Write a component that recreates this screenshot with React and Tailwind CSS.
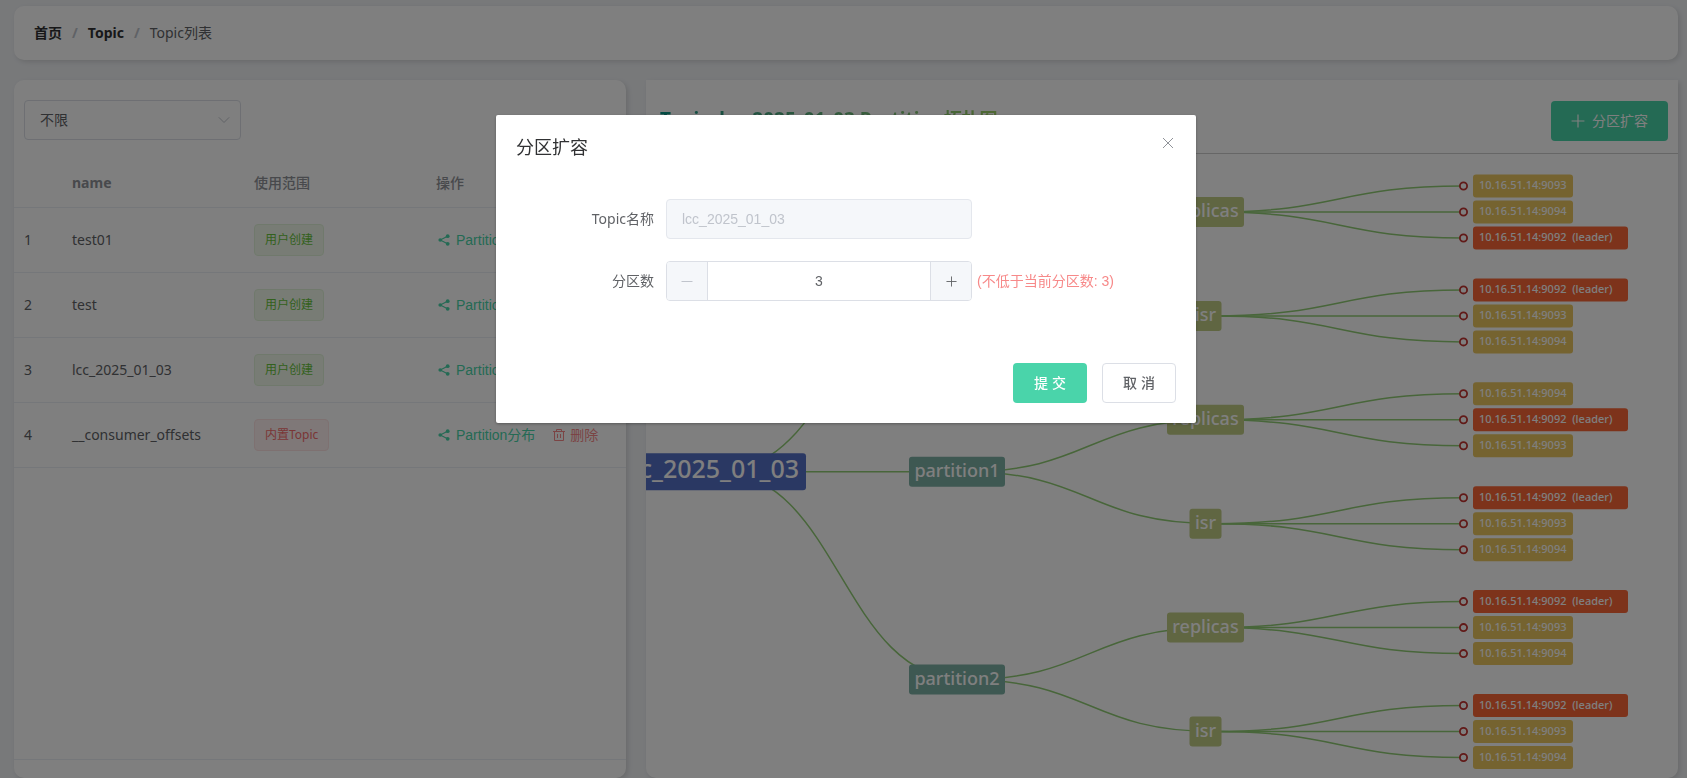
const UI = "font-['Noto_Sans','Noto_Sans_CJK_SC',sans-serif]";
const CTRL = "font-['Liberation_Sans','Noto_Sans_CJK_SC',sans-serif]";

const topics = [
  { name: 'test01', builtin: false },
  { name: 'test', builtin: false },
  { name: 'lcc_2025_01_03', builtin: false },
  { name: '__consumer_offsets', builtin: true },
];

const X = { root: 716, part: 965, group: 1214, leaf: 1463.5 };
const groups = [
  { name: 'replicas', leaves: ['9093', '9094', '9092'] },
  { name: 'isr', leaves: ['9092', '9093', '9094'] },
  { name: 'replicas', leaves: ['9094', '9092', '9093'] },
  { name: 'isr', leaves: ['9092', '9093', '9094'] },
  { name: 'replicas', leaves: ['9092', '9093', '9094'] },
  { name: 'isr', leaves: ['9092', '9093', '9094'] },
].map((g, i) => ({ ...g, y: 212 + i * 103.9 }));
const partitions = [0, 1, 2].map((i) => ({ name: `partition${i}`, y: 264 + i * 207.8 }));
const ROOT_Y = 471.8;

function curve(x0, y0, x1, y1) {
  const m = (x0 + x1) / 2;
  return `M${x0} ${y0}C${m} ${y0} ${m} ${y1} ${x1} ${y1}`;
}

function Node({ x, y, w, h, fill, children }) {
  return (
    <g>
      <rect x={x} y={y - h / 2} width={w} height={h} rx="3" fill={fill} />
      {children}
    </g>
  );
}

function Topology() {
  return (
    <svg viewBox="646 154 1032 624" className={`block w-full font-medium ${UI}`} role="img" aria-label="Partition拓扑图">
      <g fill="none" stroke="#91cc75" strokeWidth="1.5">
        {partitions.map((p) => (
          <path key={p.name} d={curve(X.root, ROOT_Y, X.part, p.y)} />
        ))}
        {groups.map((g, i) => (
          <path key={i} d={curve(X.part, partitions[Math.floor(i / 2)].y, X.group, g.y)} />
        ))}
        {groups.map((g, i) =>
          g.leaves.map((l, j) => <path key={`${i}-${l}`} d={curve(X.group, g.y, X.leaf, g.y + (j - 1) * 26)} />),
        )}
      </g>
      <Node x={606} y={ROOT_Y} w={200} h={37} fill="#5470c6">
        <text x="799" y="478" textAnchor="end" fontSize="25" fill="#fff">lcc_2025_01_03</text>
      </Node>
      {partitions.map((p) => (
        <Node key={p.name} x={909} y={p.y} w={96} h={30} fill="#7cb0a4">
          <text x="957" y={p.y + 5} textAnchor="middle" fontSize="18" fill="#fff">{p.name}</text>
        </Node>
      ))}
      {groups.map((g, i) => {
        const w = g.name === 'isr' ? 32 : 77;
        return (
          <g key={i}>
            <Node x={1205.5 - w / 2} y={g.y} w={w} h={30} fill="#c0cc84">
              <text x="1205.5" y={g.y + 5} textAnchor="middle" fontSize="18" fill="#fff">{g.name}</text>
            </Node>
            {g.leaves.map((l, j) => {
              const y = g.y + (j - 1) * 26;
              const leader = l === '9092';
              return (
                <g key={l}>
                  <circle cx={X.leaf} cy={y} r="3.6" fill="#fff" stroke="#c23531" strokeWidth="1.8" />
                  <Node x={1473} y={y} w={leader ? 155 : 100} h={23} fill={leader ? '#fb6636' : '#eac660'}>
                    <text x="1479" y={y + 3} fontSize="11" fill="#fff" className="whitespace-pre">
                      {`10.16.51.14:${l}${leader ? '  (leader)' : ''}`}
                    </text>
                  </Node>
                </g>
              );
            })}
          </g>
        );
      })}
    </svg>
  );
}

function ShareIcon() {
  return (
    <svg className="size-3" viewBox="0 0 12 12" fill="currentColor" stroke="currentColor" aria-hidden="true">
      <path d="M2.2 6 9.6 2.2M2.2 6l7.4 3.8" fill="none" strokeWidth="1.1" />
      <circle cx="2.2" cy="6" r="1.8" stroke="none" />
      <circle cx="9.7" cy="2.2" r="1.9" stroke="none" />
      <circle cx="9.7" cy="9.8" r="1.9" stroke="none" />
    </svg>
  );
}

function TrashIcon() {
  return (
    <svg className="size-3.5" viewBox="0 0 14 14" fill="none" stroke="currentColor" aria-hidden="true">
      <path d="M1 3.5h12M2.5 3.5v9h9v-9M4.5 3.5v-2h5v2M5.5 6v4M8.5 6v4" />
    </svg>
  );
}

function PlusIcon({ className }) {
  return (
    <svg className={className} viewBox="0 0 12 12" fill="none" stroke="currentColor" aria-hidden="true">
      <path d="M6 .5v11M.5 6h11" />
    </svg>
  );
}

function Dialog() {
  return (
    <div className="fixed inset-0 flex items-start justify-center bg-black/50 pt-[115px] pl-[5px]">
      <div role="dialog" aria-modal="true" aria-labelledby="dlg-title" className="w-[700px] rounded-xs bg-white shadow-[0_1px_3px_rgba(0,0,0,0.3)]">
        <header className="flex items-start justify-between px-5 pt-5 pb-2.5">
          <h2 id="dlg-title" className="text-lg leading-6 text-[#303133]">分区扩容</h2>
          <button type="button" aria-label="关闭" className="flex size-4 items-center justify-center text-[#909399]">
            <svg className="size-3" viewBox="0 0 12 12" fill="none" stroke="currentColor" aria-hidden="true">
              <path d="m1 1 10 10M11 1 1 11" />
            </svg>
          </button>
        </header>
        <form className="px-5 pt-[30px] pb-[52px] text-[#606266]">
          <div className="mb-[22px] flex h-10 items-center">
            <label htmlFor="topic" className="w-[150px] pr-3 text-right text-sm">Topic名称</label>
            <input
              id="topic"
              disabled
              value="lcc_2025_01_03"
              className={`h-10 w-[306px] rounded border border-[#e4e7ed] bg-[#f5f7fa] px-[15px] text-sm text-[#c0c4cc] ${CTRL}`}
            />
          </div>
          <div className="flex h-10 items-center">
            <label htmlFor="count" className="w-[150px] pr-3 text-right text-sm">分区数</label>
            <div className="flex h-10 w-[306px] overflow-hidden rounded border border-[#dcdfe6]">
              <button type="button" disabled aria-label="减少" className="flex w-[41px] items-center justify-center border-r border-[#dcdfe6] bg-[#f5f7fa] text-[#c0c4cc]">
                <svg className="size-3" viewBox="0 0 12 12" stroke="currentColor" aria-hidden="true">
                  <path d="M.5 6.5h11" />
                </svg>
              </button>
              <input id="count" defaultValue="3" className={`min-w-0 flex-1 text-center text-sm ${CTRL}`} />
              <button type="button" aria-label="增加" className="flex w-[41px] items-center justify-center border-l border-[#dcdfe6] bg-[#f5f7fa]">
                <PlusIcon className="size-[11px]" />
              </button>
            </div>
            <span className={`ml-[5px] text-sm text-[#f78989] ${CTRL}`}>(不低于当前分区数: 3)</span>
          </div>
        </form>
        <footer className={`flex justify-end gap-[15px] px-5 pt-2.5 pb-5 text-sm font-medium ${CTRL}`}>
          <button type="button" className="h-10 w-[74px] rounded bg-[#4ad4aa] text-white">提 交</button>
          <button type="button" className="h-10 w-[74px] rounded border border-[#dcdfe6] bg-white text-[#606266]">取 消</button>
        </footer>
      </div>
    </div>
  );
}

const CARD = 'bg-white shadow-[2px_2px_5px_rgba(0,0,0,0.12)]';

export default function App() {
  return (
    <div className={`flex min-h-screen flex-col bg-[#f0f2f5] pt-1.5 pr-[9px] pl-3.5 text-sm text-[#606266] ${UI}`}>
      <nav aria-label="breadcrumb" className={`rounded-[10px] px-5 ${CARD}`}>
        <ol className="flex h-[54px] items-center">
          <li className="font-bold text-[#303133]"><a href="#home">首页</a></li>
          <li aria-hidden="true" className="mx-2.5 font-bold text-[#c0c4cc]">/</li>
          <li className="font-bold text-[#303133]"><a href="#topic">Topic</a></li>
          <li aria-hidden="true" className="mx-2.5 font-bold text-[#c0c4cc]">/</li>
          <li>Topic列表</li>
        </ol>
      </nav>

      <main className="mt-5 grid flex-1 grid-cols-[612fr_1032fr] gap-5">
        <section className={`flex flex-col rounded-[10px] pt-5 ${CARD}`}>
          <div className="relative mx-2.5 w-[217px]">
            <select aria-label="使用范围" className="h-10 w-full appearance-none rounded border border-[#dcdfe6] bg-white px-[15px] text-sm text-[#606266]">
              <option>不限</option>
            </select>
            <svg className="pointer-events-none absolute top-3.5 right-[11px] size-3 text-[#c0c4cc]" viewBox="0 0 12 12" fill="none" stroke="currentColor" aria-hidden="true">
              <path d="m.8 3.3 5.2 5.2 5.2-5.2" />
            </svg>
          </div>
          <div className="mt-5 mb-[18px] flex-1 border-b border-[#ebeef5]">
            <table className="w-full table-fixed border-collapse text-left">
              <thead>
                <tr className="h-[47px] border-b border-[#ebeef5] text-[#909399]">
                  <th className="w-12" aria-label="序号" />
                  <th className="w-[182px] px-2.5 font-bold">name</th>
                  <th className="w-[182px] px-2.5 font-medium">使用范围</th>
                  <th className="px-2.5 font-medium">操作</th>
                </tr>
              </thead>
              <tbody>
                {topics.map((t, i) => (
                  <tr key={t.name} className="h-[65px] border-b border-[#ebeef5]">
                    <td className="px-2.5">{i + 1}</td>
                    <td className="px-2.5">{t.name}</td>
                    <td className="px-2.5">
                      {t.builtin ? (
                        <span className="inline-flex h-8 items-center rounded border border-[#fde2e2] bg-[#fef0f0] px-2.5 text-xs text-[#f56c6c]">内置Topic</span>
                      ) : (
                        <span className="inline-flex h-8 items-center rounded border border-[#e1f3d8] bg-[#f0f9eb] px-2.5 text-xs text-[#67c23a]">用户创建</span>
                      )}
                    </td>
                    <td className={`px-3 ${CTRL}`}>
                      <div className="flex gap-[17px]">
                        <button type="button" className="flex items-center gap-1.5 whitespace-nowrap text-[#49d4a9]">
                          <ShareIcon />
                          Partition分布
                        </button>
                        <button type="button" className="flex items-center gap-1 whitespace-nowrap text-[#f78989]">
                          <TrashIcon />
                          删除
                        </button>
                      </div>
                    </td>
                  </tr>
                ))}
              </tbody>
            </table>
          </div>
        </section>

        <section className={`rounded-b-[10px] ${CARD}`}>
          <header className="flex h-[74px] items-center justify-between border-b border-[#ccc] pr-2.5 pl-3.5">
            <h1 className="bg-linear-to-r from-[#009688] to-[#a0d468] bg-clip-text pt-1.5 text-[19px] font-bold text-transparent">
              Topic: lcc_2025_01_03 Partition<span className="text-lg">拓扑图</span>
            </h1>
            <button type="button" className={`mt-2 flex h-10 items-center gap-[7px] rounded bg-[#49d4a9] px-5 text-white ${CTRL}`}>
              <PlusIcon className="size-3.5" />
              分区扩容
            </button>
          </header>
          <Topology />
        </section>
      </main>
      <Dialog />
    </div>
  );
}
